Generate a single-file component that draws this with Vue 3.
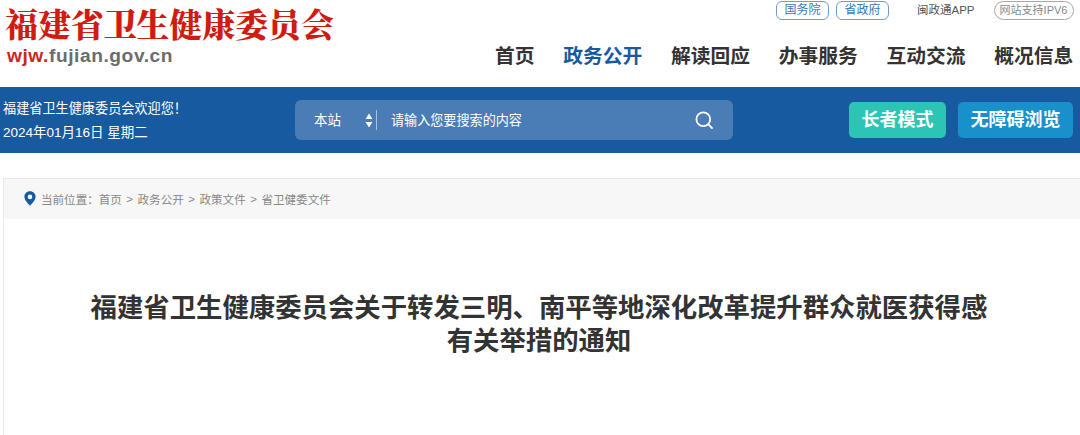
<template>
  <div class="page">
    <header class="header">
      <div class="logo">
        <div class="logo-name">福建省卫生健康委员会</div>
        <div class="logo-url"><span class="red">wjw.</span>fujian.gov.cn</div>
      </div>
      <div class="header-right">
        <div class="top-links">
          <a class="pill blue first">国务院</a>
          <a class="pill blue second">省政府</a>
          <span class="app">闽政通APP</span>
          <a class="pill grey">网站支持IPV6</a>
        </div>
        <nav class="nav">
          <a
            v-for="item in navItems"
            :key="item"
            class="nav-item"
            :class="{ active: item === activeNav }"
          >{{ item }}</a>
        </nav>
      </div>
    </header>

    <section class="bar">
      <div class="welcome">
        <div>福建省卫生健康委员会欢迎您！</div>
        <div class="date">2024年01月16日 星期二</div>
      </div>
      <div class="search">
        <span class="scope">本站</span>
        <svg class="arrows" width="8" height="15" viewBox="0 0 8 15">
          <path d="M4 0.5 L7.5 6 L0.5 6 Z M4 14.5 L0.5 9 L7.5 9 Z" fill="#fff" />
        </svg>
        <span class="divider"></span>
        <span class="placeholder">请输入您要搜索的内容</span>
        <svg class="search-icon" width="20" height="20" viewBox="0 0 20 20" fill="none" stroke="#fff" stroke-width="1.8">
          <circle cx="9.3" cy="9.3" r="6.9" />
          <path d="M14.3 14.3 L18 18" stroke-linecap="round" />
        </svg>
      </div>
      <div class="modes">
        <a class="mode elder">长者模式</a>
        <a class="mode access">无障碍浏览</a>
      </div>
    </section>

    <main class="content">
      <div class="crumbs">
        <svg class="pin" width="12" height="15" viewBox="0 0 12 15">
          <path
            fill-rule="evenodd"
            d="M6 0.3 C2.8 0.3 0.4 2.7 0.4 5.8 C0.4 9.4 4 12.6 6 14.7 C8 12.6 11.6 9.4 11.6 5.8 C11.6 2.7 9.2 0.3 6 0.3 Z M6 3.6 A2.3 2.3 0 1 1 6 8.2 A2.3 2.3 0 1 1 6 3.6 Z"
            fill="#175aa0"
          />
        </svg>
        <span>当前位置：</span>
        <template v-for="(crumb, i) in crumbs" :key="crumb">
          <span v-if="i > 0" class="sep">&gt;</span>
          <span>{{ crumb }}</span>
        </template>
      </div>
      <h1 class="title">福建省卫生健康委员会关于转发三明、南平等地深化改革提升群众就医获得感<br />有关举措的通知</h1>
    </main>
  </div>
</template>

<script setup>
const navItems = ['首页', '政务公开', '解读回应', '办事服务', '互动交流', '概况信息']
const activeNav = '政务公开'
const crumbs = ['首页', '政务公开', '政策文件', '省卫健委文件']
</script>

<style>
html,
body {
  margin: 0;
  background: #fff;
  overflow: hidden;
}
</style>

<style scoped>
.page {
  width: 1080px;
  height: 435px;
  overflow: hidden;
  font-family: "Liberation Sans", "Noto Sans CJK SC", sans-serif;
}

.header {
  height: 87px;
  display: flex;
  justify-content: space-between;
}

.logo {
  padding: 4px 0 0 5px;
}

.logo-name {
  font-family: "Noto Serif CJK SC", "Noto Sans CJK SC", serif;
  font-size: 32.9px;
  line-height: 38px;
  font-weight: 900;
  color: #d01c10;
  white-space: nowrap;
}

.logo-url {
  margin: 2px 0 0 2px;
  font-size: 19.2px;
  line-height: 24px;
  font-weight: 700;
  letter-spacing: 0.55px;
  color: #6c6c6c;
}

.red {
  color: #c9281d;
}

.header-right {
  width: 585px;
  display: flex;
  flex-direction: column;
}

.top-links {
  height: 19px;
  margin-top: 1px;
  padding-left: 281px;
  display: flex;
  align-items: center;
  font-size: 12px;
}

.pill {
  height: 17px;
  line-height: 17px;
  border-radius: 6px;
  text-align: center;
  box-sizing: content-box;
}

.blue {
  width: 51px;
  color: #3c78b4;
  border: 1px solid #6f9ccb;
}

.second {
  margin-left: 7px;
}

.app {
  margin: 0 0 3px 28px;
  font-size: 11.5px;
  color: #555;
  white-space: nowrap;
}

.grey {
  width: 78px;
  margin-left: 19px;
  font-size: 11px;
  color: #888;
  border: 1px solid #a8a8a8;
  border-radius: 10px;
}

.nav {
  margin-top: 23px;
  display: flex;
  gap: 28.75px;
  white-space: nowrap;
}

.nav-item {
  font-size: 19.75px;
  line-height: 26px;
  font-weight: 700;
  color: #333;
}

.nav-item.active {
  color: #175aa0;
}

.bar {
  height: 66px;
  background: #175aa0;
  display: flex;
  align-items: center;
  color: #fff;
}

.welcome {
  width: 295px;
  padding-left: 3px;
  box-sizing: border-box;
  font-size: 13.15px;
  line-height: 23px;
}

.date {
  margin-top: 1px;
  font-size: 13.5px;
}

.search {
  width: 438px;
  height: 40px;
  border-radius: 6px;
  background: #4a7cb6;
  display: flex;
  align-items: center;
  font-size: 13.1px;
}

.scope {
  margin-left: 19px;
  padding-bottom: 2px;
  font-size: 13.5px;
}

.arrows {
  margin-left: 24px;
}

.divider {
  width: 1px;
  height: 20px;
  margin-left: 3px;
  background: #a9c0dc;
}

.placeholder {
  margin-left: 14px;
  padding-bottom: 2px;
  flex: 1;
}

.search-icon {
  margin-right: 19px;
}

.modes {
  margin-left: 116px;
  display: flex;
  gap: 12px;
}

.mode {
  height: 36px;
  line-height: 36px;
  border-radius: 5px;
  text-align: center;
  font-size: 18px;
  font-weight: 700;
}

.elder {
  width: 97px;
  background: #2cc4b4;
}

.access {
  width: 115px;
  background: #1790cc;
}

.content {
  margin: 25px 0 0 3px;
  width: 1077px;
  height: 300px;
  box-sizing: border-box;
  border: 1px solid #e8e8e8;
  border-bottom: none;
  border-right: none;
}

.crumbs {
  height: 40px;
  padding: 0 0 1px 20px;
  box-sizing: border-box;
  background: #f7f7f7;
  display: flex;
  align-items: center;
  font-size: 11.55px;
  color: #888;
}

.pin {
  margin-right: 5px;
}

.sep {
  margin: 0 4.5px;
}

.title {
  margin: 73px 0 0;
  padding-right: 6px;
  text-align: center;
  font-size: 26.38px;
  line-height: 33px;
  font-weight: 700;
  color: #333;
  white-space: nowrap;
}
</style>
